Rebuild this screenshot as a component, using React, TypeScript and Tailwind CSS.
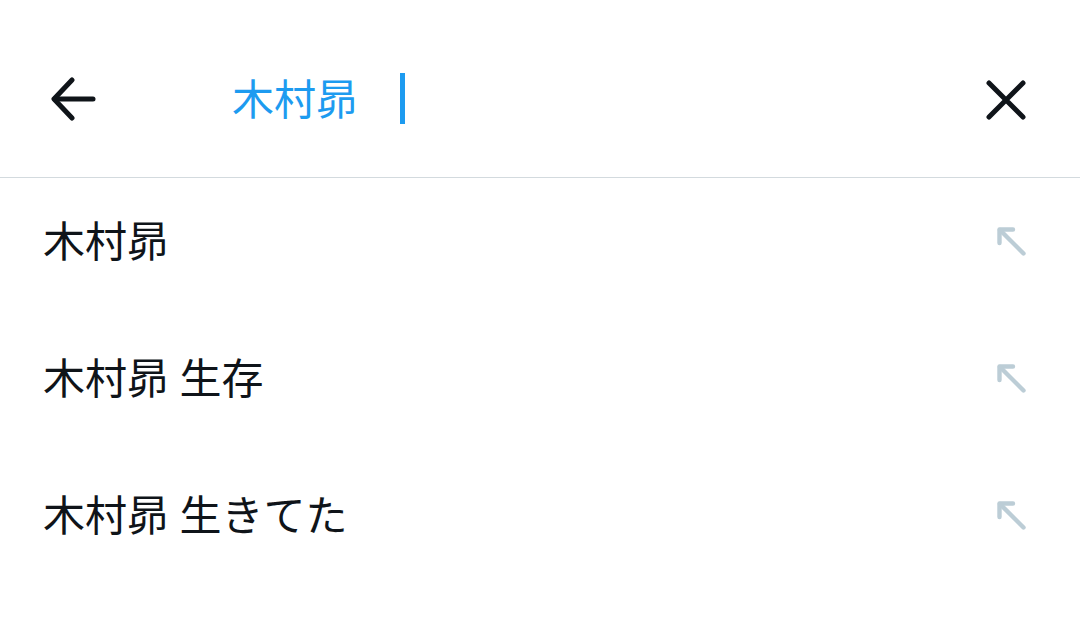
const rows = ["木村昴", "木村昴 生存", "木村昴 生きてた"];

function ArrowUpLeft() {
  return (
    <svg width="32" height="32" viewBox="0 0 32 32" fill="none" stroke="#bccdd6" strokeWidth="4.4" strokeLinecap="round" strokeLinejoin="round">
      <path d="M3.5 17V3.5H17" />
      <path d="M4 4l23.5 23.5" />
    </svg>
  );
}

export default function App() {
  return (
    <div className="w-[1080px] h-[634px] bg-white overflow-hidden" style={{ fontFamily: '"Noto Sans CJK JP", "Noto Sans", sans-serif' }}>
      <div className="h-[178px] flex items-center border-b border-[#d3dade] pt-[20px]">
        <div className="w-[232px] flex items-center pl-[50px]">
          <svg width="48" height="44" viewBox="0 0 48 44" fill="none" stroke="#0f1419" strokeWidth="5" strokeLinecap="round" strokeLinejoin="round">
            <path d="M22 3L4 22l18 19" />
            <path d="M5 22h38" />
          </svg>
        </div>
        <div className="flex-1 flex items-center">
          <span className="text-[42px] leading-none text-[#1d9bf0] pb-[4px]">木村昴</span>
          <span className="ml-[42px] w-[5px] h-[51px] bg-[#1d9bf0]" />
        </div>
        <div className="pr-[54px] pt-[2px]">
          <svg width="40" height="40" viewBox="0 0 40 40" fill="none" stroke="#0f1419" strokeWidth="5" strokeLinecap="round">
            <path d="M3 3l34 34M37 3L3 37" />
          </svg>
        </div>
      </div>
      <div className="flex flex-col">
        {rows.map((r) => (
          <div key={r} className="h-[137px] flex items-center justify-between pl-[43px] pr-[52px] pb-[15px]">
            <span className="text-[42px] leading-none text-[#0f1419] [word-spacing:1px]">{r}</span>
            <span className="mt-[5px]">
              <ArrowUpLeft />
            </span>
          </div>
        ))}
      </div>
    </div>
  );
}
